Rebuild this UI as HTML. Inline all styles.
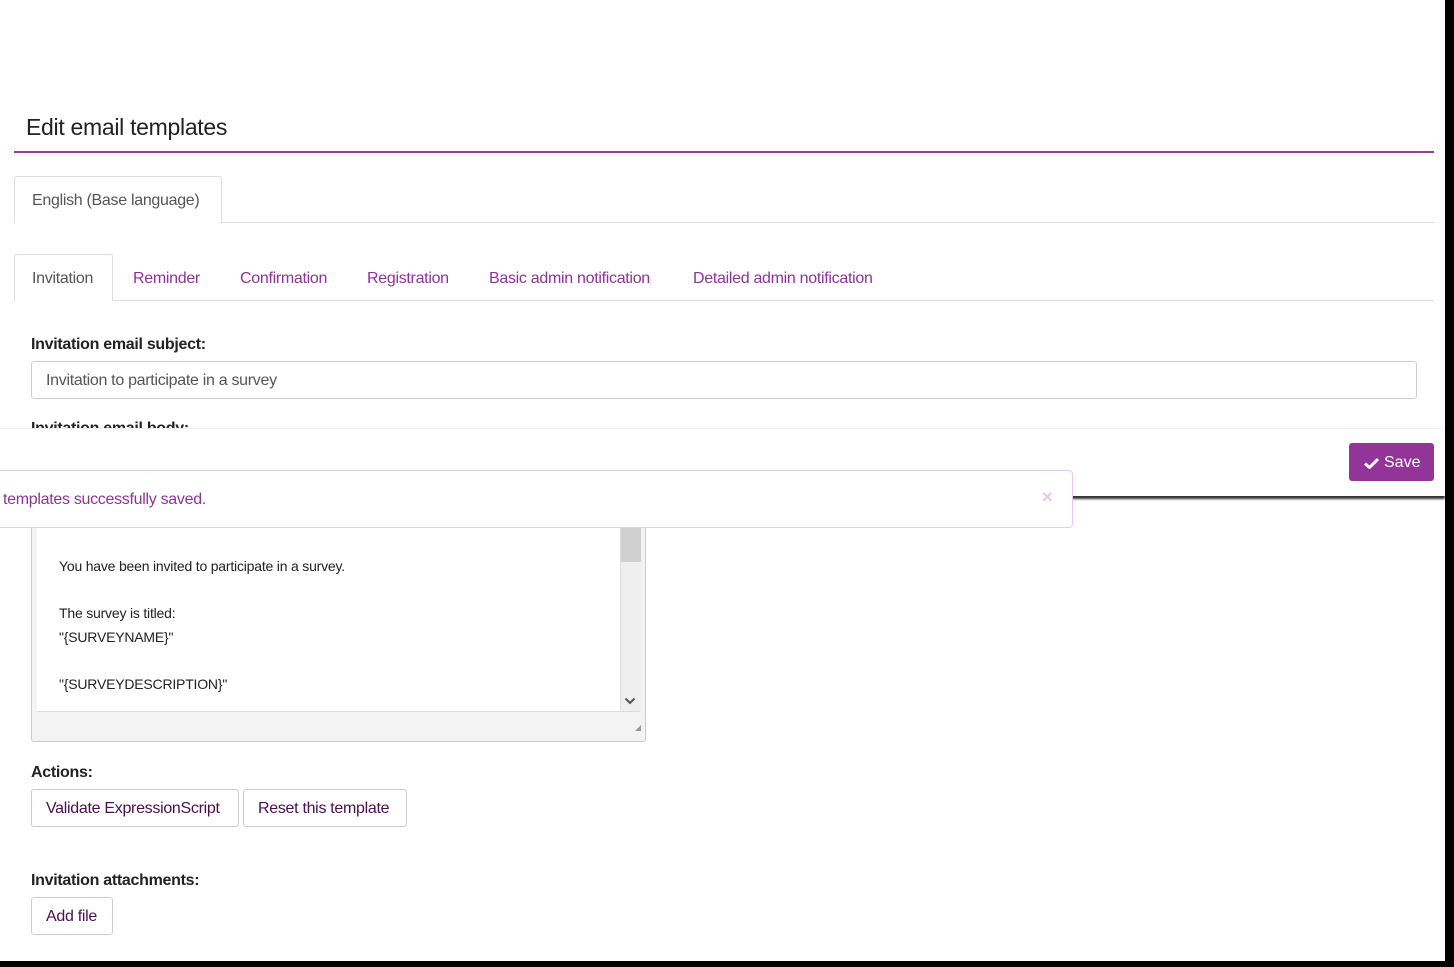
<!DOCTYPE html>
<html><head><meta charset="utf-8"><style>
*{box-sizing:border-box;margin:0;padding:0}
body{width:1454px;height:967px;background:#fff;position:relative;overflow:hidden;font-family:"Liberation Sans",Arial,sans-serif;color:#333}
.a{position:absolute;white-space:nowrap}
.p{color:#8f3398}
.t{font-size:16px;letter-spacing:-0.3px}
.btn{position:absolute;border:1px solid #ccc;border-radius:3px;background:#fff;color:#4a1050;font-size:16px;letter-spacing:-0.3px;display:flex;align-items:center;padding-left:14px;padding-top:1px}
</style></head><body>
<div class="a" style="left:26px;top:114px;font-size:23px;letter-spacing:-0.3px;color:#222">Edit email templates</div>
<div class="a" style="left:14px;top:151px;width:1420px;height:2px;background:#9b3aa3"></div>
<div class="a" style="left:14px;top:176px;width:208px;height:47px;border:1px solid #ddd;border-bottom:none;border-radius:3px 3px 0 0;background:#fff"></div>
<div class="a" style="left:222px;top:222px;width:1212px;height:1px;background:#ddd"></div>
<div class="a t" style="left:32px;top:192px;color:#555">English (Base language)</div>
<div class="a" style="left:14px;top:254px;width:99px;height:47px;border:1px solid #ddd;border-bottom:none;border-radius:3px 3px 0 0;background:#fff"></div>
<div class="a" style="left:113px;top:300px;width:1321px;height:1px;background:#ddd"></div>
<div class="a t" style="left:32px;top:270px;color:#555">Invitation</div>
<div class="a t p" style="left:133px;top:270px">Reminder</div>
<div class="a t p" style="left:240px;top:270px">Confirmation</div>
<div class="a t p" style="left:367px;top:270px">Registration</div>
<div class="a t p" style="left:489px;top:270px">Basic admin notification</div>
<div class="a t p" style="left:693px;top:270px">Detailed admin notification</div>
<div class="a" style="left:31px;top:336px;font-size:16px;font-weight:bold;letter-spacing:-0.3px;color:#222">Invitation email subject:</div>
<div class="a" style="left:31px;top:361px;width:1386px;height:38px;border:1px solid #ccc;border-radius:3px"></div>
<div class="a t" style="left:46px;top:372px;color:#555">Invitation to participate in a survey</div>
<div class="a" style="left:31px;top:420px;font-size:16px;font-weight:bold;letter-spacing:-0.3px;color:#222;height:8px;overflow:hidden">Invitation email body:</div>
<div class="a" style="left:0;top:428px;width:1445px;height:68px;background:#fff;border-top:1px solid #eee;box-shadow:0 3px 2px #333"></div>
<div class="a" style="left:1349px;top:443px;width:85px;height:38px;background:#933598;border-radius:3px;color:#fff;font-size:16px;display:flex;align-items:center;padding-left:15px;padding-top:1px">
<svg width="15" height="12" viewBox="0 0 15 12"><path d="M1 6.5 L5.5 10.5 L14 2" stroke="#fff" stroke-width="3" fill="none"/></svg><span style="margin-left:5px">Save</span></div>
<div class="a" style="left:31px;top:496px;width:615px;height:246px;border:1px solid #ccc;border-radius:3px;background:#f3f3f3"></div>
<div class="a" style="left:37px;top:496px;width:584px;height:215px;background:#fff;border-right:1px solid #ddd"></div>
<div class="a" style="left:37px;top:711px;width:603px;height:1px;background:#ddd"></div>
<div class="a" style="left:621px;top:496px;width:20px;height:215px;background:#efefef"></div>
<div class="a" style="left:621px;top:527px;width:20px;height:35px;background:#cfcfcf"></div>
<svg class="a" style="left:624px;top:696px" width="12" height="10" viewBox="0 0 12 10"><path d="M1.5 2.5 L6 7 L10.5 2.5" stroke="#555" stroke-width="2" fill="none"/></svg>
<div class="a" style="left:635px;top:725px;width:0;height:0;border-left:6px solid transparent;border-bottom:6px solid #999"></div>
<div class="a" style="left:59px;top:555px;font-size:14px;letter-spacing:-0.2px;color:#222;line-height:23.5px">You have been invited to participate in a survey.<br><br>The survey is titled:<br>"{SURVEYNAME}"<br><br>"{SURVEYDESCRIPTION}"</div>
<div class="a" style="left:-10px;top:470px;width:1083px;height:58px;border:1px solid #e8c9ec;border-radius:4px;background:#fff"></div>
<div class="a t p" style="left:3px;top:491px">templates successfully saved.</div>
<div class="a" style="left:1042px;top:487px;font-size:18px;font-weight:bold;color:#e3c7e7">×</div>
<div class="a" style="left:31px;top:764px;font-size:16px;font-weight:bold;letter-spacing:-0.3px;color:#222">Actions:</div>
<div class="btn" style="left:31px;top:789px;width:208px;height:38px">Validate ExpressionScript</div>
<div class="btn" style="left:243px;top:789px;width:164px;height:38px">Reset this template</div>
<div class="a" style="left:31px;top:872px;font-size:16px;font-weight:bold;letter-spacing:-0.3px;color:#222">Invitation attachments:</div>
<div class="btn" style="left:31px;top:897px;width:82px;height:38px">Add file</div>
<div class="a" style="left:1445px;top:0;width:9px;height:967px;background:#000"></div>
<div class="a" style="left:0;top:961px;width:1454px;height:6px;background:#000"></div>
</body></html>
